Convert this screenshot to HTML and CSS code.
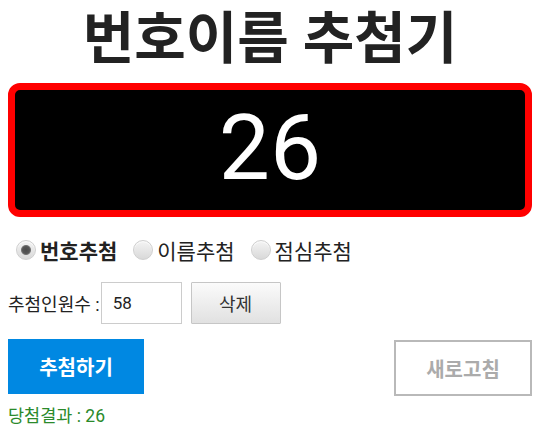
FILE: index.html
```html
<!DOCTYPE html>
<html lang="ko">
<head>
<meta charset="utf-8">
<title>번호이름 추첨기</title>
<link rel="stylesheet" href="styles.css">
</head>
<body>
  <h1 class="title">번호이름 추첨기</h1>
  <div class="display">26</div>
  <div class="modes">
    <label class="mode mode-bold"><input type="radio" name="mode" class="radio" checked><span>번호추첨</span></label>
    <label class="mode"><input type="radio" name="mode" class="radio"><span>이름추첨</span></label>
    <label class="mode"><input type="radio" name="mode" class="radio"><span>점심추첨</span></label>
  </div>
  <div class="count-row">
    <span class="count-label">추첨인원수 :</span>
    <input class="count-input" type="text" value="58">
    <button class="btn-delete" type="button">삭제</button>
  </div>
  <div class="action-row">
    <button class="btn-draw" type="button">추첨하기</button>
    <button class="btn-reset" type="button">새로고침</button>
  </div>
  <div class="result">당첨결과 : 26</div>
</body>
</html>
```

FILE: styles.css
```css
html, body {
  background: #ffffff;
}
body {
  margin: 8px;
  font-family: Roboto, "Noto Sans CJK KR", sans-serif;
  color: #222222;
}
.title {
  margin: 0;
  font-size: 56px;
  line-height: 62px;
  font-weight: 700;
  text-align: center;
  color: #222222;
}
.display {
  margin-top: 13px;
  height: 134px;
  box-sizing: border-box;
  border: 7px solid #ff0000;
  border-radius: 12px;
  background: #000000;
  color: #ffffff;
  font-size: 91px;
  line-height: 1;
  display: flex;
  align-items: center;
  justify-content: center;
  padding-bottom: 3px;
}
.modes {
  margin-top: 19px;
  height: 28px;
  display: flex;
  align-items: center;
  gap: 16px;
  padding-left: 8px;
}
.mode {
  display: flex;
  align-items: center;
  gap: 4px;
  font-size: 21px;
  line-height: 28px;
  color: #222222;
}
.mode span {
  position: relative;
  top: 2px;
}
.mode-bold {
  font-weight: 700;
}
.radio {
  appearance: none;
  -webkit-appearance: none;
  margin: 0;
  width: 20px;
  height: 20px;
  border-radius: 50%;
  border: 1px solid #cfcfcf;
  box-sizing: border-box;
  background: linear-gradient(#f4f4f4, #d9d9d9);
  box-shadow: inset 0 1px 1px rgba(255,255,255,0.8);
}
.radio:checked {
  background: radial-gradient(circle at 50% 50%, #4a4a4a 0, #555555 3.5px, #777777 4.6px, rgba(0,0,0,0) 5.4px), linear-gradient(#f4f4f4, #d9d9d9);
}
.count-row {
  margin-top: 18px;
  display: flex;
  align-items: center;
  height: 42px;
}
.count-label {
  font-size: 18px;
  color: #222222;
  margin-right: 1px;
}
.count-input {
  width: 81px;
  height: 42px;
  box-sizing: border-box;
  border: 1px solid #cccccc;
  padding: 0 0 0 11px;
  margin: 0;
  font-family: Roboto, "Noto Sans CJK KR", sans-serif;
  font-size: 17px;
  color: #222222;
  background: #ffffff;
  outline: none;
}
.btn-delete {
  margin: 0 0 0 9px;
  width: 90px;
  height: 42px;
  box-sizing: border-box;
  border: 1px solid #c6c6c6;
  border-radius: 1px;
  background: linear-gradient(#fbfbfb, #e1e1e1);
  font-family: Roboto, "Noto Sans CJK KR", sans-serif;
  font-size: 18px;
  color: #333333;
  padding: 0;
}
.action-row {
  margin-top: 15px;
  display: flex;
  justify-content: space-between;
  align-items: flex-start;
}
.btn-draw {
  margin: 0;
  width: 136px;
  height: 55px;
  border: none;
  background: #0088e2;
  color: #ffffff;
  font-family: Roboto, "Noto Sans CJK KR", sans-serif;
  font-size: 20px;
  font-weight: 700;
  padding: 0;
}
.btn-reset {
  margin: 1px 0 0 0;
  width: 138px;
  height: 56px;
  box-sizing: border-box;
  border: 2px solid #b9b9b9;
  background: #ffffff;
  color: #ababab;
  font-family: Roboto, "Noto Sans CJK KR", sans-serif;
  font-size: 20px;
  font-weight: 700;
  padding: 0;
}
.result {
  margin-top: 8px;
  font-size: 17.5px;
  line-height: 24px;
  color: #2b8a2b;
}
```
